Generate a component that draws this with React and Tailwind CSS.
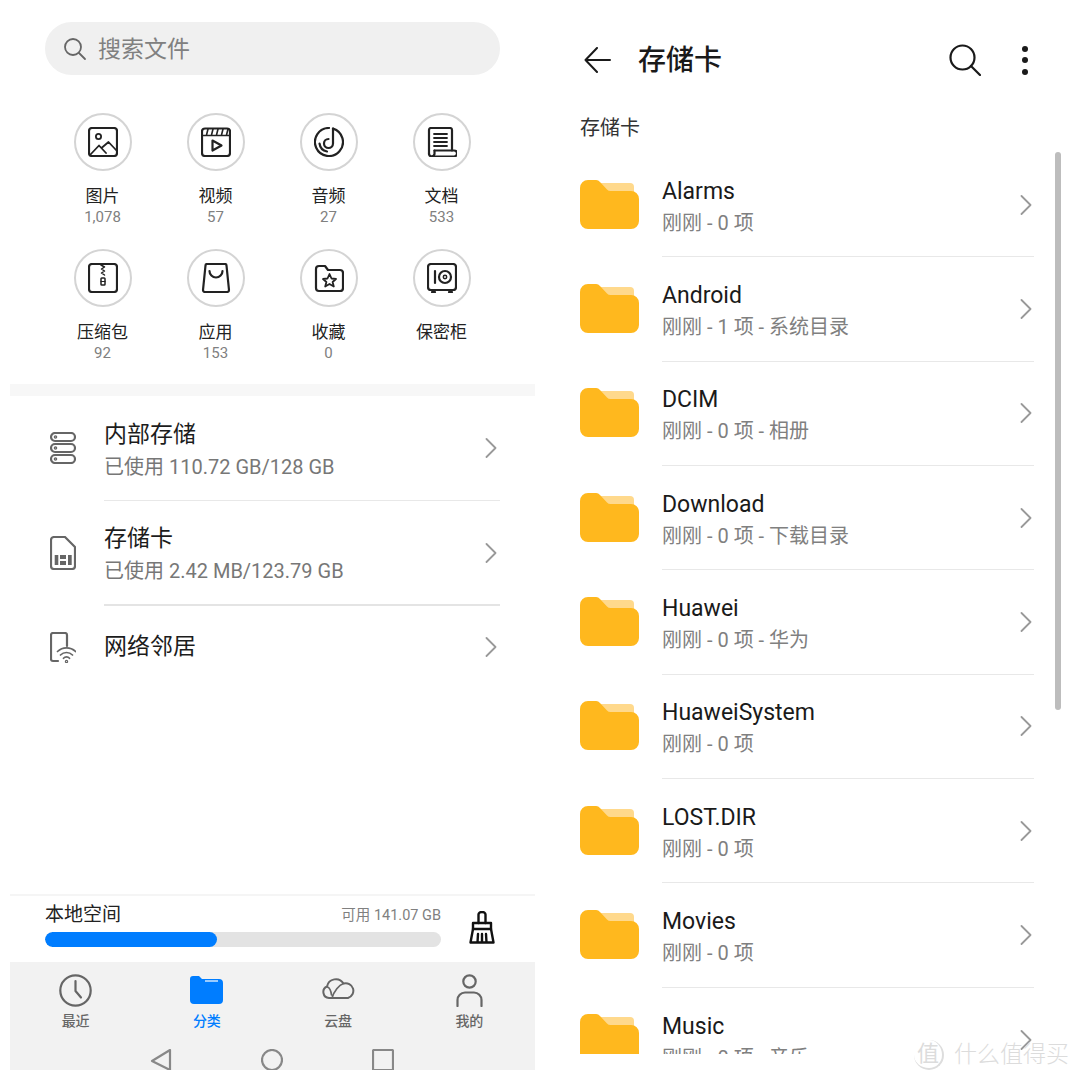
import React from 'react';

const FONT = "font-['Roboto','Noto_Sans_CJK_SC',sans-serif]";

const Icon = ({ size = 30, w, h, box = '0 0 30 30', sw = 2.2, color = '#222', children }) => (
    <svg width={w || size} height={h || size} viewBox={box} fill="none" stroke={color} strokeWidth={sw} strokeLinecap="round" strokeLinejoin="round">
        {children}
    </svg>
);

const categories = [
    {
        label: '图片', count: '1,078',
        icon: <>
            <rect x="1" y="1" width="28" height="28" rx="3" />
            <circle cx="10.5" cy="9.5" r="2.6" strokeWidth="1.8" />
            <path d="M2 28 L11 18.5 L18 26 M13.5 21 L20.5 15 L29 24" strokeWidth="1.8" />
        </>,
    },
    {
        label: '视频', count: '57',
        icon: <>
            <rect x="1" y="1.5" width="28" height="27.5" rx="3" />
            <path d="M1 8.5 H29 M7 2 L5.5 8 M12 2 L10.5 8 M17 2 L15.5 8 M22 2 L20.5 8 M27 2 L25.5 8" strokeWidth="1.6" />
            <path d="M11.5 13.5 L20.5 18.5 L11.5 23.5 Z" />
        </>,
    },
    {
        label: '音频', count: '27',
        icon: <>
            <path d="M19 1.6 A14 14 0 1 1 15 1" />
            <path d="M19 1.6 V16.5 A4.5 4.5 0 1 1 14.5 12" />
            <path d="M5.5 16.5 A9.5 9.5 0 0 0 13 24.5" />
        </>,
    },
    {
        label: '文档', count: '533',
        icon: <>
            <path d="M2 27 V3 A2 2 0 0 1 4 1 H23 A2 2 0 0 1 25 3 V23.5" />
            <path d="M7.5 23.5 H27 A3 3 0 0 1 27 29.5 H5 A3 3 0 0 1 2 27" />
            <path d="M5 29.5 A3 3 0 0 0 7.5 27 V23.5" />
            <path d="M7 7 H20 M7 11 H20 M7 15 H20 M7 19 H20" strokeWidth="1.8" />
        </>,
    },
    {
        label: '压缩包', count: '92',
        icon: <>
            <rect x="1" y="1" width="28" height="28" rx="3" />
            <path d="M13 2 L16.5 4 L13.5 6 L16.5 8 L13.5 10 L16.5 12" strokeWidth="1.5" />
            <rect x="13" y="15" width="4" height="7" rx="0.8" strokeWidth="1.5" />
            <path d="M13 18.5 H17" strokeWidth="1.2" />
        </>,
    },
    {
        label: '应用', count: '153',
        icon: <>
            <path d="M6 1 H24 A1.5 1.5 0 0 1 25.5 2.5 L28 27 A2 2 0 0 1 26 29 H4 A2 2 0 0 1 2 27 L4.5 2.5 A1.5 1.5 0 0 1 6 1 Z" />
            <path d="M8.5 8 A6.5 6.5 0 0 0 21.5 8" />
        </>,
    },
    {
        label: '收藏', count: '0',
        icon: <>
            <path d="M2 6 A3 3 0 0 1 5 3 H11 L14 7 H26 A3 3 0 0 1 29 10 V25 A3 3 0 0 1 26 28 H5 A3 3 0 0 1 2 25 Z" />
            <path d="M15.5 11 L17.5 15.5 L22 16 L18.6 19 L19.8 23.5 L15.5 21 L11.2 23.5 L12.4 19 L9 16 L13.5 15.5 Z" strokeWidth="1.8" />
        </>,
    },
    {
        label: '保密柜', count: '',
        icon: <>
            <rect x="1" y="1" width="28" height="26" rx="3" />
            <path d="M8 8 V20" />
            <circle cx="18" cy="14" r="6" />
            <circle cx="18" cy="14" r="1.7" strokeWidth="1.5" />
            <path d="M5 29 H8 M22 29 H25" />
        </>,
    },
];

const folders = [
    ['Alarms', '刚刚 - 0 项'],
    ['Android', '刚刚 - 1 项 - 系统目录'],
    ['DCIM', '刚刚 - 0 项 - 相册'],
    ['Download', '刚刚 - 0 项 - 下载目录'],
    ['Huawei', '刚刚 - 0 项 - 华为'],
    ['HuaweiSystem', '刚刚 - 0 项'],
    ['LOST.DIR', '刚刚 - 0 项'],
    ['Movies', '刚刚 - 0 项'],
    ['Music', '刚刚 - 0 项 - 音乐'],
];

const Chevron = () => (
    <svg width="12" height="20" viewBox="0 0 12 20" fill="none" stroke="#999" strokeWidth="1.8" strokeLinecap="round" strokeLinejoin="round">
        <path d="M1.5 1 L10.5 10 L1.5 19" />
    </svg>
);

const Folder = () => (
    <svg width="59" height="49" viewBox="0 0 59 49" className="shrink-0">
        <path d="M20 3 H50 A4 4 0 0 1 54 7 V14 H24 Z" fill="#FFD98C" />
        <path d="M8 0 H15 A6 6 0 0 1 20 2 L27 9.5 A5 5 0 0 0 31 11 H51 A8 8 0 0 1 59 19 V41 A8 8 0 0 1 51 49 H8 A8 8 0 0 1 0 41 V8 A8 8 0 0 1 8 0 Z" fill="#FFB81E" />
    </svg>
);

const StorageRow = ({ icon, title, sub, className, textClass = '' }) => (
    <div className={`flex items-center pl-[40px] pr-[38px] ${className}`}>
        <div className="w-[26px] flex justify-center shrink-0">{icon}</div>
        <div className={`ml-[28px] flex-1 ${textClass}`}>
            <div className="text-[23px] leading-[32px] text-[#1c1c1c]">{title}</div>
            {sub && <div className="text-[20px] leading-[32px] text-[#777777]">{sub}</div>}
        </div>
        <Chevron />
    </div>
);

const Tab = ({ icon, label, active }) => (
    <div className="flex flex-col items-center">
        <div className="h-[34px] flex items-center">{icon}</div>
        <div className={`mt-[4px] text-[14px] leading-[20px] font-medium ${active ? 'text-[#007dff]' : 'text-[#666666]'}`}>{label}</div>
    </div>
);

const App = () => {
    return (
        <div className={`relative w-[1080px] h-[1080px] bg-white flex overflow-hidden ${FONT}`}>
            {/* Left phone */}
            <div className="ml-[10px] w-[525px] h-[1070px] flex flex-col overflow-hidden shrink-0">
                <div className="mt-[22px] mx-[35px] h-[53px] rounded-full bg-[#f0f0f0] flex items-center pl-[18px] shrink-0">
                    <svg width="24" height="24" viewBox="0 0 24 24" fill="none" stroke="#666" strokeWidth="1.8" strokeLinecap="round">
                        <circle cx="10" cy="10" r="8" />
                        <path d="M16 16 L22 22" />
                    </svg>
                    <span className="ml-[11px] pt-[4px] text-[23px] text-[#808080]">搜索文件</span>
                </div>

                <div className="mt-[38px] ml-[36px] w-[452px] grid grid-cols-4 gap-y-[24px] shrink-0">
                    {categories.map((c) => (
                        <div key={c.label} className="flex flex-col items-center">
                            <div className="w-[58px] h-[58px] rounded-full border-2 border-[#d4d4d4] flex items-center justify-center">
                                <Icon>{c.icon}</Icon>
                            </div>
                            <div className="mt-[13px] h-[24px] text-[17px] leading-[24px] text-[#222222]">{c.label}</div>
                            <div className="mt-[1px] h-[16px] text-[15px] leading-[16px] text-[#808080]">{c.count}</div>
                        </div>
                    ))}
                </div>

                <div className="mt-[23px] h-[12px] bg-[#f7f7f7] shrink-0"></div>

                <StorageRow
                    className="h-[104px] shrink-0"
                    textClass="pt-[6px]"
                    title="内部存储"
                    sub="已使用 110.72 GB/128 GB"
                    icon={
                        <Icon w={26} h={32} box="0 0 26 32" color="#666">
                            <rect x="1" y="1" width="24" height="8" rx="4" />
                            <rect x="1" y="12" width="24" height="8" rx="4" />
                            <rect x="1" y="23" width="24" height="8" rx="4" />
                            <circle cx="5.5" cy="5" r="0.7" />
                            <circle cx="5.5" cy="16" r="0.7" />
                            <circle cx="5.5" cy="27" r="0.7" />
                        </Icon>
                    }
                />
                <div className="ml-[94px] mr-[35px] h-px bg-[#e8e8e8] shrink-0"></div>
                <StorageRow
                    className="h-[103px] shrink-0"
                    textClass="pt-[4px]"
                    title="存储卡"
                    sub="已使用 2.42 MB/123.79 GB"
                    icon={
                        <Icon w={26} h={34} box="0 0 26 34" color="#666">
                            <path d="M4 1 H15 L25 11 V30 A3 3 0 0 1 22 33 H4 A3 3 0 0 1 1 30 V4 A3 3 0 0 1 4 1 Z" />
                            <path d="M4.7 19 H8.3 V29 H4.7 Z M10 19 H16 V23 H10 Z M10 25 H16 V29 H10 Z M18 19 H21.7 V29 H18 Z" fill="#666" stroke="none" />
                        </Icon>
                    }
                />
                <div className="ml-[94px] mr-[35px] h-[2px] bg-[#e4e4e4] shrink-0"></div>
                <StorageRow
                    className="h-[82px] shrink-0"
                    title="网络邻居"
                    icon={
                        <Icon w={26} h={31} box="0 0 26 31" color="#666">
                            <path d="M8 29 H3 A2 2 0 0 1 1 27 V3 A2 2 0 0 1 3 1 H15 A2 2 0 0 1 17 3 V14" />
                            <path d="M7.5 19.5 A13 13 0 0 1 25.5 19.5 M10.5 23 A8.5 8.5 0 0 1 22.5 23 M13.5 26.3 A4 4 0 0 1 19.5 26.3" strokeWidth="1.7" />
                            <circle cx="16.5" cy="29.5" r="0.6" />
                        </Icon>
                    }
                />

                <div className="flex-1"></div>

                {/* Space summary */}
                <div className="h-[2px] bg-[#f5f5f5] shrink-0"></div>
                <div className="h-[66px] pl-[35px] pr-[40px] flex shrink-0">
                    <div className="w-[396px]">
                        <div className="flex justify-between items-center h-[36px] pt-[3px]">
                            <span className="text-[19px] text-[#222222]">本地空间</span>
                            <span className="text-[14.5px] text-[#808080]">可用 141.07 GB</span>
                        </div>
                        <div className="h-[15px] rounded-full bg-[#e3e3e3] overflow-hidden">
                            <div className="h-full w-[172px] rounded-full bg-[#007dff]"></div>
                        </div>
                    </div>
                    <div className="ml-[28px] pt-[15px]">
                        <Icon w={26} h={33} box="0 0 26 33" sw={2.4} color="#111">
                            <path d="M9.5 12 V3.5 A3.5 2.5 0 0 1 16.5 3.5 V12" />
                            <path d="M4 12 H22 V18 H4 Z" />
                            <path d="M4 18 L1.5 31.5 H24.5 L22 18 M9 23 L8.5 31.5 M13 23 V31.5 M17 23 L17.5 31.5" />
                        </Icon>
                    </div>
                </div>

                {/* Bottom tabs */}
                <div className="h-[108px] bg-[#f2f2f2] shrink-0 overflow-hidden">
                    <div className="grid grid-cols-4 pt-[11px]">
                        <Tab
                            label="最近"
                            icon={
                                <Icon size={33} box="0 0 33 33" color="#666">
                                    <circle cx="16.5" cy="16.5" r="15.2" />
                                    <path d="M16.5 7 V17 L22 23.5" />
                                </Icon>
                            }
                        />
                        <Tab
                            active
                            label="分类"
                            icon={
                                <svg width="33" height="28" viewBox="0 0 33 28">
                                    <path d="M3 0 H9 L12 3 H29 A4 4 0 0 1 33 7 V24 A4 4 0 0 1 29 28 H4 A4 4 0 0 1 0 24 V3 A3 3 0 0 1 3 0 Z" fill="#007dff" />
                                    <path d="M15 5 H28" stroke="#ffffff" strokeWidth="1.2" fill="none" />
                                </svg>
                            }
                        />
                        <Tab
                            label="云盘"
                            icon={
                                <div className="-translate-y-[2px]">
                                    <Icon w={33} h={22} box="0 0 33 22" sw={2} color="#666">
                                        <path d="M7 21 A6 6 0 0 1 5 9.5 A9 9 0 0 1 21.5 6.5 A7.5 7.5 0 0 1 26 21 Z" />
                                        <path d="M10 21 C12 14 17 8 21.5 6.5 M5.5 10 C8 11 9 14 9.5 18" strokeWidth="1.7" />
                                    </Icon>
                                </div>
                            }
                        />
                        <Tab
                            label="我的"
                            icon={
                                <Icon w={27} h={33} box="0 0 27 33" color="#666">
                                    <circle cx="13.5" cy="7.5" r="6.2" />
                                    <path d="M1.5 32 V26 A7.5 7.5 0 0 1 9 18.5 H18 A7.5 7.5 0 0 1 25.5 26 V32" />
                                </Icon>
                            }
                        />
                    </div>
                    <div className="mt-[18px] pl-[140px] flex gap-[89px]">
                        <Icon size={22} box="0 0 22 22" color="#888">
                            <path d="M20 1 V21 L2 12 Z" />
                        </Icon>
                        <Icon size={22} box="0 0 22 22" color="#888">
                            <circle cx="11" cy="11" r="10" />
                        </Icon>
                        <Icon size={22} box="0 0 22 22" color="#888">
                            <rect x="1" y="1" width="20" height="20" rx="1" />
                        </Icon>
                    </div>
                </div>
            </div>

            {/* Right phone */}
            <div className="ml-[45px] w-[454px] flex flex-col shrink-0">
                <div className="mt-[40px] h-[40px] flex items-center pl-[4px] pr-[6px]">
                    <svg width="27" height="26" viewBox="0 0 27 26" fill="none" stroke="#1a1a1a" strokeWidth="2" strokeLinecap="round" strokeLinejoin="round">
                        <path d="M26 13 H1.5 M13 1 L1.5 13 L13 25" />
                    </svg>
                    <span className="ml-[27px] pt-[2px] text-[28px] leading-[40px] font-medium text-[#1a1a1a]">存储卡</span>
                    <div className="flex-1"></div>
                    <svg width="32" height="32" viewBox="0 0 32 32" fill="none" stroke="#1a1a1a" strokeWidth="2.2" strokeLinecap="round">
                        <circle cx="13.5" cy="13.5" r="12" />
                        <path d="M22 22 L31 31" />
                    </svg>
                    <div className="ml-[41px] flex flex-col gap-[5.5px]">
                        <div className="w-[6px] h-[6px] rounded-full bg-[#1a1a1a]"></div>
                        <div className="w-[6px] h-[6px] rounded-full bg-[#1a1a1a]"></div>
                        <div className="w-[6px] h-[6px] rounded-full bg-[#1a1a1a]"></div>
                    </div>
                </div>

                <div className="mt-[34px] text-[20px] leading-[28px] text-[#333333]">存储卡</div>

                <div className="mt-[10px] h-[902px] overflow-hidden">
                    {folders.map(([name, meta], i) => (
                        <div key={name} className="h-[104.33px] flex items-center">
                            <Folder />
                            <div className={`ml-[23px] flex-1 h-full flex items-center translate-y-[1px] ${i < folders.length - 1 ? 'border-b border-[#e8e8e8]' : ''}`}>
                                <div className="flex-1 pt-[3px]">
                                    <div className="text-[23px] leading-[32px] text-[#1a1a1a]">{name}</div>
                                    <div className="mt-[1px] text-[20px] leading-[28px] text-[#808080]">{meta}</div>
                                </div>
                                <div className="mr-[2px]"><Chevron /></div>
                            </div>
                        </div>
                    ))}
                </div>
            </div>

            {/* Scrollbar */}
            <div className="absolute left-[1055px] top-[152px] w-[6px] h-[558px] rounded-full bg-[#bdbdbd]"></div>

            {/* Watermark */}
            <div className="absolute left-[914px] top-[1040px] flex items-center text-[#dcdcdc]">
                <span className="w-[30px] h-[30px] rounded-full border-r-2 border-b-2 border-[#dddddd] flex items-center justify-center text-[22px] leading-none">值</span>
                <span className="ml-[10px] text-[23px] leading-[30px] font-light whitespace-nowrap">什么值得买</span>
            </div>
        </div>
    );
};

export default App;
